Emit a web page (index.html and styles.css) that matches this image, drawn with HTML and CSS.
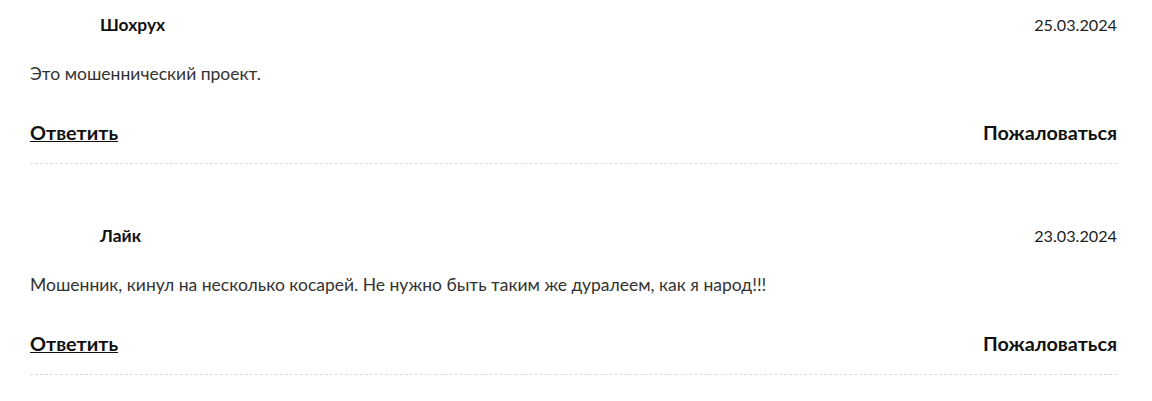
FILE: index.html
```html
<!DOCTYPE html>
<html lang="ru">
<head>
<meta charset="utf-8">
<link rel="stylesheet" href="styles.css">
</head>
<body>
<div class="comments">
  <div class="comment">
    <div class="comment-head">
      <span class="comment-name">Шохрух</span>
      <span class="comment-date">25.03.2024</span>
    </div>
    <p class="comment-text">Это мошеннический проект.</p>
    <div class="comment-actions">
      <a class="reply" href="#">Ответить</a>
      <a class="report" href="#">Пожаловаться</a>
    </div>
  </div>
  <div class="comment">
    <div class="comment-head">
      <span class="comment-name">Лайк</span>
      <span class="comment-date">23.03.2024</span>
    </div>
    <p class="comment-text">Мошенник, кинул на несколько косарей. Не нужно быть таким же дуралеем, как я народ!!!</p>
    <div class="comment-actions">
      <a class="reply" href="#">Ответить</a>
      <a class="report" href="#">Пожаловаться</a>
    </div>
  </div>
</div>
</body>
</html>
```
FILE: styles.css
```css
html, body {
  margin: 0;
  padding: 0;
  background: #fff;
}
body {
  font-family: Lato, "Noto Sans", sans-serif;
  color: #222;
}
.comments {
  padding: 0 35px 0 30px;
}
.comment {
  padding-bottom: 19px;
  border-bottom: 1px dashed #ddd;
}
.comment + .comment {
  margin-top: 47px;
}
.comment-head {
  display: flex;
  justify-content: space-between;
  align-items: center;
  height: 48px;
  padding-left: 70px;
}
.comment-name {
  font-weight: 700;
  font-size: 17.4px;
  color: #111;
}
.comment-date {
  font-size: 16.2px;
  color: #222;
}
.comment-text {
  margin: 14px 0 0;
  font-size: 17.5px;
  line-height: 24px;
  color: #333;
}
.comment-actions {
  display: flex;
  justify-content: space-between;
  margin-top: 34px;
  line-height: 24px;
}
.comment-actions a {
  font-size: 19.8px;
  font-weight: 700;
  color: #111;
}
.comment-actions .report {
  text-decoration: none;
}
```
